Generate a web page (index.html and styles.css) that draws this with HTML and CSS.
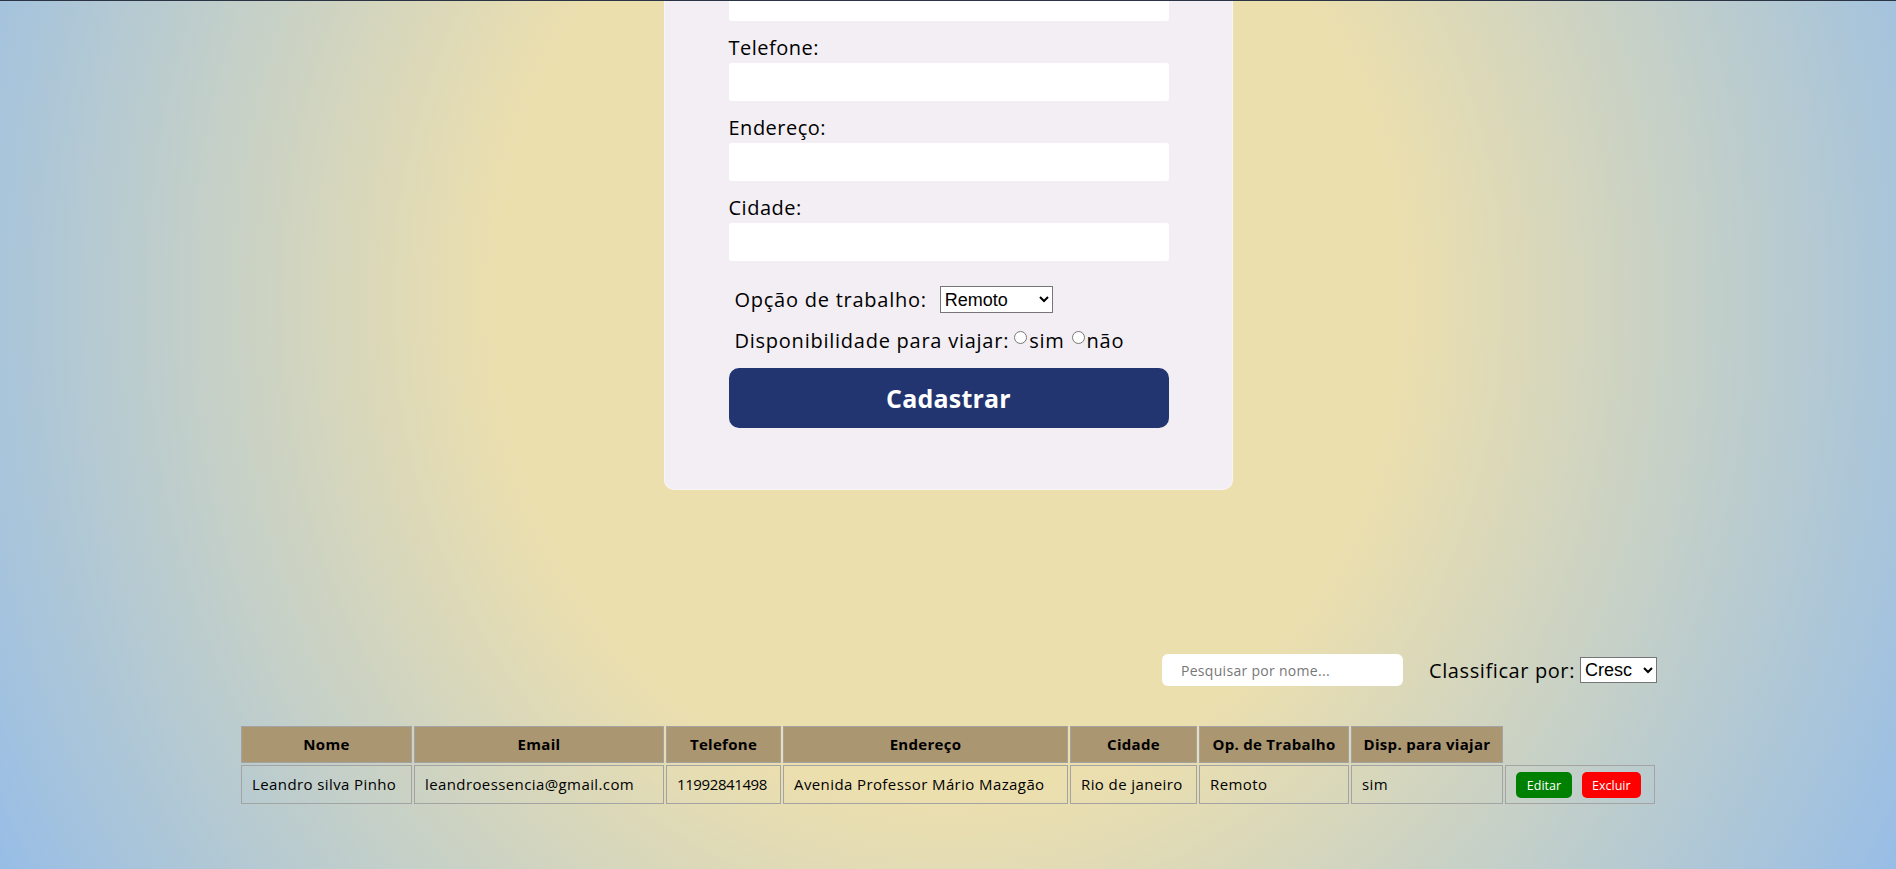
FILE: index.html
```html
<!DOCTYPE html>
<html lang="pt-BR">
<head>
<meta charset="utf-8">
<title>Cadastro</title>
<link rel="stylesheet" href="styles.css">
</head>
<body>
<div class="topline"></div>
<main class="page">
  <form class="card">
    <div class="stub"></div>
    <label class="lbl">Telefone:</label>
    <input class="field" type="text">
    <label class="lbl">Endereço:</label>
    <input class="field" type="text">
    <label class="lbl">Cidade:</label>
    <input class="field" type="text">
    <div class="row row-work">
      <span>Opção de trabalho:</span>
      <select class="sel sel-work"><option>Remoto</option><option>Presencial</option><option>Híbrido</option></select>
    </div>
    <div class="row row-travel">Disponibilidade para viajar:<input class="radio" type="radio" name="viajar"><span>sim</span><input class="radio radio-2" type="radio" name="viajar"><span>não</span></div>
    <button class="btn" type="button">Cadastrar</button>
  </form>

  <section class="list">
    <div class="tools">
      <input class="search" type="text" placeholder="Pesquisar por nome...">
      <label class="sort-lbl">Classificar por:</label>
      <select class="sel sel-sort"><option>Cresc</option><option>Decresc</option></select>
    </div>
    <table class="grid">
      <colgroup>
        <col class="c1"><col class="c2"><col class="c3"><col class="c4"><col class="c5"><col class="c6"><col class="c7"><col class="c8">
      </colgroup>
      <thead>
        <tr>
          <th>Nome</th><th>Email</th><th>Telefone</th><th>Endereço</th><th>Cidade</th><th>Op. de Trabalho</th><th>Disp. para viajar</th>
        </tr>
      </thead>
      <tbody>
        <tr>
          <td>Leandro silva Pinho</td>
          <td>leandroessencia@gmail.com</td>
          <td class="num">11992841498</td>
          <td>Avenida Professor Mário Mazagão</td>
          <td>Rio de janeiro</td>
          <td>Remoto</td>
          <td>sim</td>
          <td class="actions"><button class="act act-edit" type="button">Editar</button><button class="act act-del" type="button">Excluir</button></td>
        </tr>
      </tbody>
    </table>
  </section>
</main>
</body>
</html>
```
FILE: styles.css
```css
html {
  height: 100%;
  background: radial-gradient(ellipse 1000px 1100px at 948px 300px, #ecdfae 0%, #ecdfae 45%, #a9c5da 95%, #95bce8 110%);
  background-color: #a9c5da;
}
body {
  margin: 0;
  height: 100%;
  overflow: hidden;
  font-family: "Open Sans", "Noto Sans", sans-serif;
  color: #000;
}
.topline {
  height: 1px;
  background: #2b3444;
}
.page {
  display: flex;
  flex-direction: column;
  align-items: center;
}
.card {
  width: 569px;
  box-sizing: border-box;
  padding: 0 63px 61px 64px;
  background: #f3eef4;
  border: 1px solid #f8f5f6;
  border-top: none;
  border-radius: 0 0 10px 10px;
  display: flex;
  flex-direction: column;
}
.stub {
  height: 20px;
  background: #fff;
  border-radius: 0 0 3px 3px;
}
.lbl {
  display: block;
  font-size: 20px;
  letter-spacing: 0.5px;
  line-height: 28px;
  margin: 13px 0 1px;
}
.field {
  height: 38px;
  border: none;
  border-radius: 3px;
  background: #fff;
  padding: 0 10px;
  box-sizing: border-box;
  width: 100%;
  font: inherit;
}
.row {
  display: flex;
  align-items: center;
  padding-left: 6px;
  font-size: 20px;
  letter-spacing: 0.75px;
}
.row-work {
  margin-top: 25px;
  height: 27px;
  gap: 13px;
}
.row-travel {
  margin-top: 13px;
  height: 28px;
}
.sel {
  font-family: "Liberation Sans", Arial, sans-serif;
  font-size: 18px;
  letter-spacing: 0;
  background: #fff;
  color: #000;
  border: 1px solid #767676;
  border-radius: 0;
  box-sizing: border-box;
}
.sel-work {
  width: 113px;
  height: 27px;
}
.radio {
  width: 13px;
  height: 13px;
  margin: 0 2px 6px 5px;
  accent-color: #767676;
}
.radio-2 {
  margin-left: 7px;
}
.btn {
  margin-top: 14px;
  height: 60px;
  border: none;
  border-radius: 10px;
  background: #223570;
  color: #fff;
  font-family: inherit;
  font-size: 25px;
  font-weight: 700;
  letter-spacing: 0.2px;
  cursor: pointer;
}
.list {
  margin-top: 164px;
  width: 1418px;
  display: flex;
  flex-direction: column;
}
.tools {
  display: flex;
  justify-content: flex-end;
  align-items: center;
  height: 32px;
}
.search {
  width: 241px;
  height: 32px;
  box-sizing: border-box;
  border: none;
  border-radius: 6px;
  background: #fff;
  padding: 0 19px;
  font-family: inherit;
  font-size: 14px;
  letter-spacing: 0.3px;
}
.search::placeholder {
  color: #777;
}
.sort-lbl {
  margin-left: 26px;
  font-size: 20px;
  letter-spacing: 0.6px;
}
.sel-sort {
  margin-left: 5px;
  width: 77px;
  height: 26px;
}
.grid {
  margin-top: 38px;
  width: 1418px;
  table-layout: fixed;
  border-collapse: separate;
  border-spacing: 2px;
  font-size: 15px;
}
.c1 { width: 171px; }
.c2 { width: 250px; }
.c3 { width: 115px; }
.c4 { width: 285px; }
.c5 { width: 127px; }
.c6 { width: 150px; }
.c7 { width: 152px; }
.c8 { width: 150px; }
.grid th {
  background: #ab9672;
  border: 1px solid #a3a3a3;
  font-weight: 700;
  letter-spacing: 0.3px;
  line-height: 35px;
  padding: 0 2px;
  text-align: center;
  white-space: nowrap;
}
.grid td {
  border: 1px solid #a3a3a3;
  letter-spacing: 0.4px;
  line-height: 37px;
  padding: 0 10px;
  text-align: left;
  white-space: nowrap;
}
.grid td.num {
  letter-spacing: -0.4px;
}
.grid td.actions {
  line-height: 26px;
  padding: 0 10px;
  vertical-align: middle;
}
.act {
  height: 26px;
  border: none;
  border-radius: 5px;
  color: #fff;
  font-family: inherit;
  font-size: 12.5px;
  letter-spacing: 0;
  padding: 0 10px;
  vertical-align: middle;
  cursor: pointer;
}
.act-edit {
  background: #008000;
  min-width: 56px;
}
.act-del {
  background: #ff0000;
  margin-left: 10px;
  min-width: 58px;
}
```
